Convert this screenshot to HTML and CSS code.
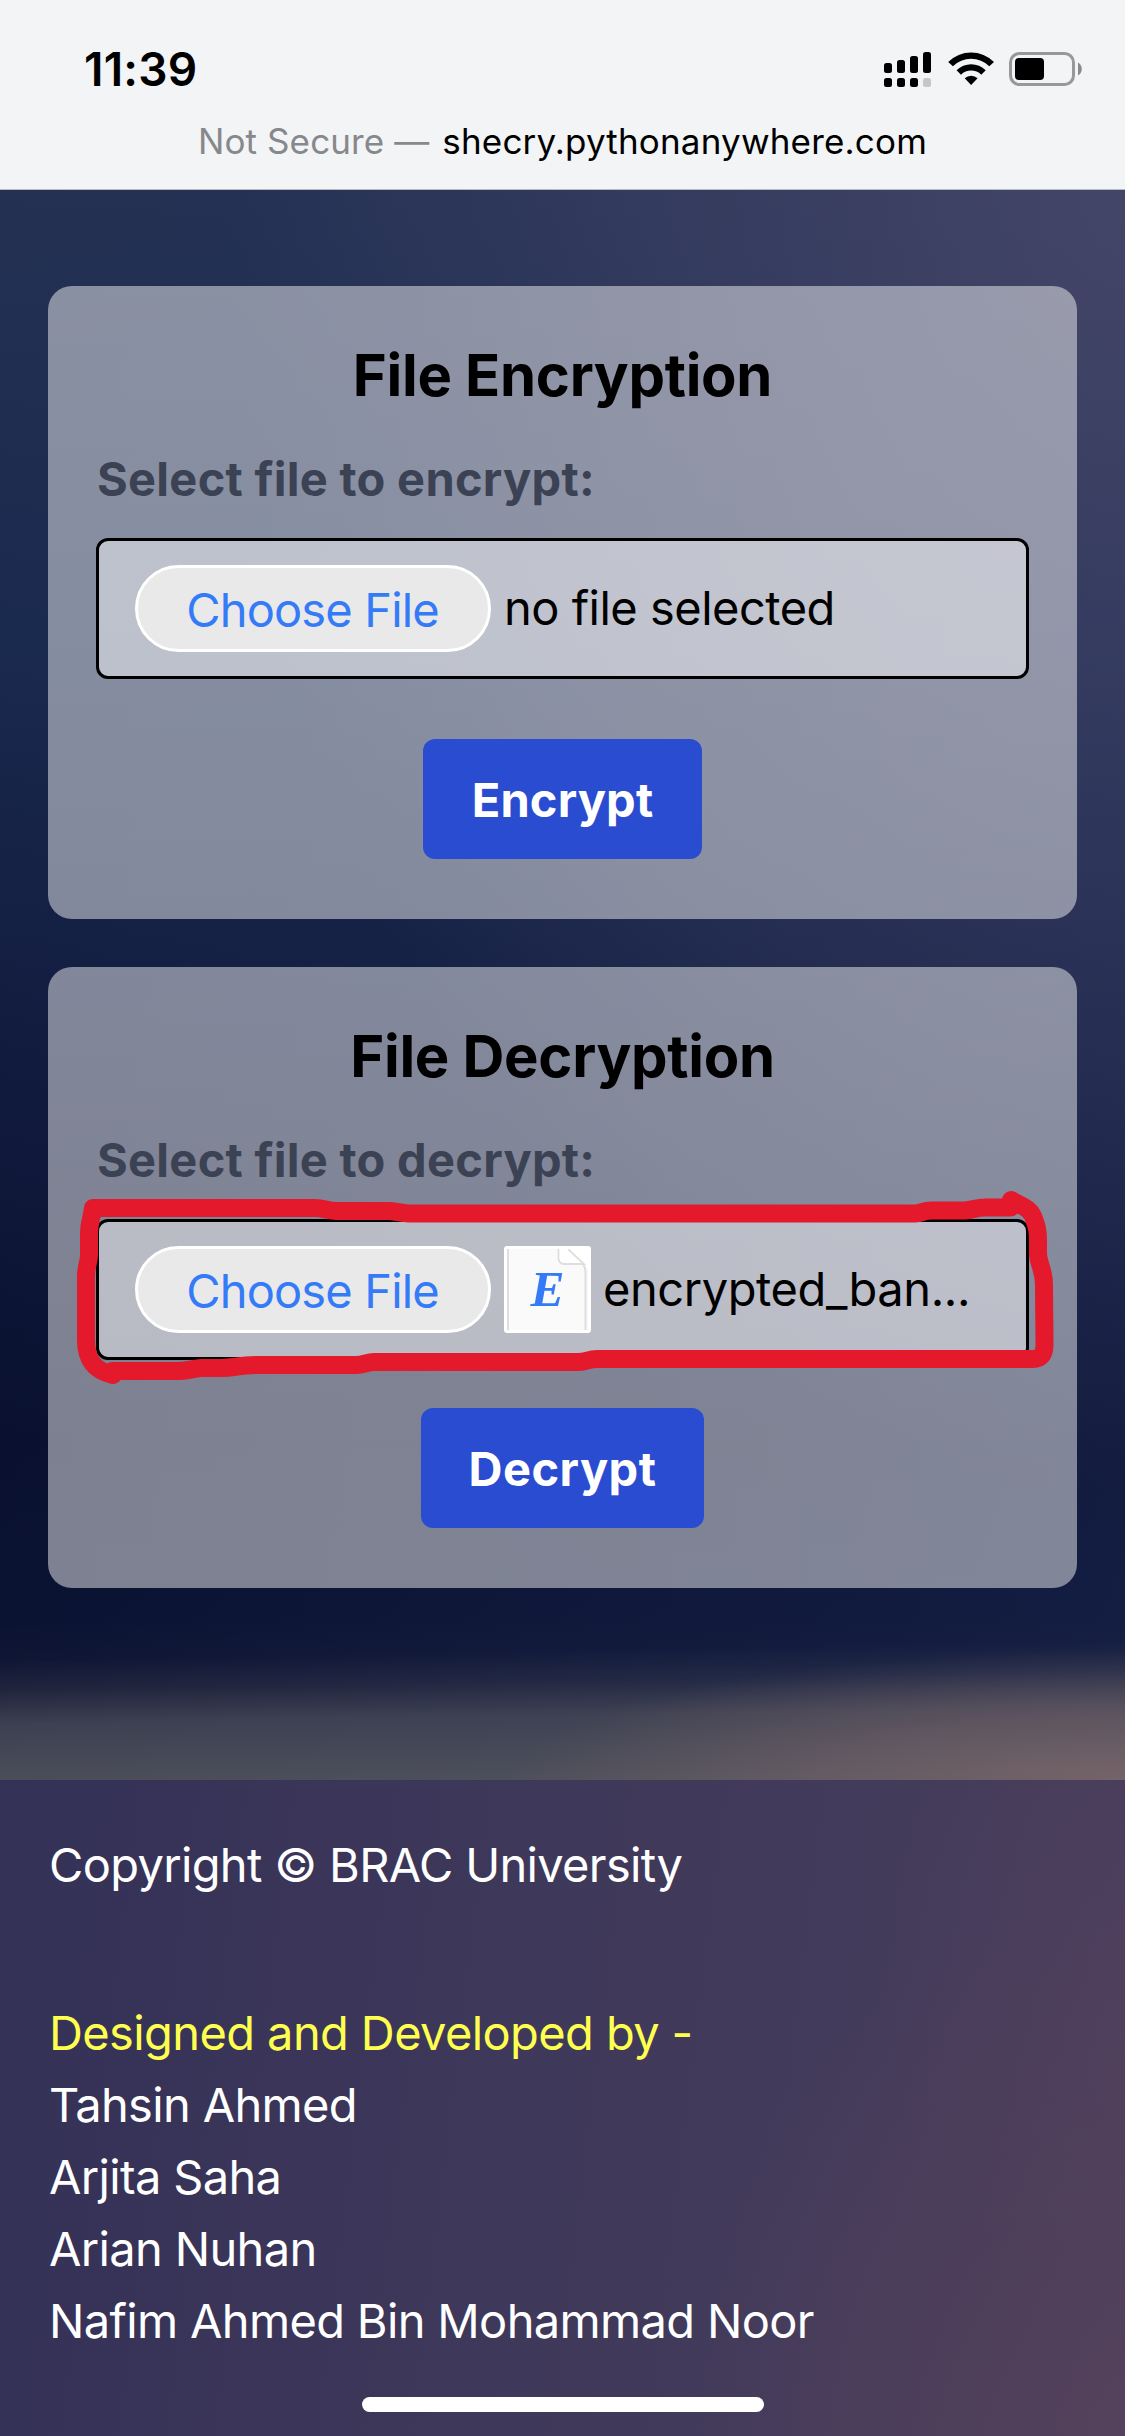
FILE: index.html
```
<!DOCTYPE html>
<html lang="en">
<head>
<meta charset="utf-8">
<title>File Encryption</title>
<link rel="stylesheet" href="styles.css">
</head>
<body>
<header class="browser-bar">
  <div class="status">
    <span class="time">11:39</span>
    <svg class="status-icons" width="200" height="36" viewBox="0 0 200 36">
      <rect x="0" y="11" width="8" height="10" rx="2.5"/>
      <rect x="13" y="8" width="8" height="13" rx="2.5"/>
      <rect x="26" y="4" width="8" height="17" rx="2.5"/>
      <rect x="39" y="0" width="8" height="21" rx="2.5"/>
      <rect x="0" y="26" width="8" height="9" rx="2.5"/>
      <rect x="13" y="26" width="8" height="9" rx="2.5"/>
      <rect x="26" y="26" width="8" height="9" rx="2.5"/>
      <rect x="39" y="26" width="8" height="9" rx="2.5" fill="#c5c6c8"/>
      <path d="M64.2 10 A32.5 32.5 0 0 1 110 10 L105.300 14.300 A26 26 0 0 0 68.900 14.300 Z"/>
      <path d="M72.600 18.300 A20.500 20.500 0 0 1 101.700 18.300 L97.300 22.700 A14.500 14.500 0 0 0 77 22.700 Z"/>
      <path d="M80.700 26.300 A9.500 9.500 0 0 1 93.600 26.300 L87.100 33 Z"/>
      <rect x="126.500" y="1.500" width="63" height="31" rx="9" fill="none" stroke="#97989a" stroke-width="3"/>
      <rect x="131" y="6" width="29" height="22" rx="4"/>
      <path d="M194 10.500 C199 13 199 21 194 23.500 Z" fill="#88898b"/>
    </svg>
  </div>
  <div class="address"><span class="insecure">Not Secure —</span><span class="host">shecry.pythonanywhere.com</span></div>
</header>

<main class="content">
  <section class="card">
    <h2 class="card-title">File Encryption</h2>
    <div class="label">Select file to encrypt:</div>
    <div class="field">
      <span class="choose">Choose File</span>
      <span class="file-name">no file selected</span>
    </div>
    <button class="submit encrypt">Encrypt</button>
  </section>

  <section class="card">
    <h2 class="card-title">File Decryption</h2>
    <div class="label">Select file to decrypt:</div>
    <div class="field">
      <span class="choose">Choose File</span>
      <span class="thumb">
        <svg class="sheet" width="81" height="81" viewBox="0 0 81 81">
          <rect width="81" height="81" fill="#fafafa"/>
          <path d="M1 0V81M78.500 81V24Q78.500 17 74 13L60 0" fill="none" stroke="#dedede" stroke-width="2"/>
          <path d="M61 0H81V20Q79 16 76 13Z" fill="#fff"/>
          <path d="M51.500 0V9Q51.500 15 57.500 15H77L61 0" fill="#fff" stroke="#dedede" stroke-width="1.800"/>
        </svg>
        <span class="letter">E</span>
      </span>
      <span class="file-name picked">encrypted_ban...</span>
      <svg class="marker" width="990" height="210" viewBox="76 1190 990 210">
        <path d="M93 1208 H315 C324 1208 328 1211 337 1211 H388 C396 1211 400 1213.500 409 1213.500 H915 C922 1213 923 1210.500 932 1210.500 H965 C973 1210 976 1207.500 985 1207.500 H1011 V1200 C1021 1206 1031 1208 1034 1219 Q1038 1228 1038 1240 V1255 C1039 1265 1044 1270 1044 1285 L1044.500 1345 Q1044.500 1359 1033 1359 H597 C588 1359 587 1362 578 1362 H374 C367 1362 364 1365 356 1365 H260 C240 1365 235 1367.500 222 1368 H201 C190 1369 188 1371 177 1371 H112 L113 1375 C96 1371 86 1362 86 1340 V1276 C86 1266 89 1262 89 1255 V1233 C89 1222 92 1218 93 1208 Z"/>
      </svg>
    </div>
    <button class="submit decrypt">Decrypt</button>
  </section>
</main>

<footer class="footer">
  <p class="line copyright">Copyright © BRAC University</p>
  <p class="line credit">Designed and Developed by -</p>
  <p class="line">Tahsin Ahmed</p>
  <p class="line">Arjita Saha</p>
  <p class="line">Arian Nuhan</p>
  <p class="line">Nafim Ahmed Bin Mohammad Noor</p>
  <div class="home-bar"></div>
</footer>
</body>
</html>
```
FILE: styles.css
```
* { box-sizing: border-box; margin: 0; padding: 0; }

body {
  width: 1125px;
  height: 2436px;
  display: flex;
  flex-direction: column;
  overflow: hidden;
  font-family: Inter, "Liberation Sans", sans-serif;
  font-size: 47px;
  line-height: 72px;
  color: #000;
}

/* Browser chrome */
.browser-bar {
  height: 190px;
  padding-top: 44px;
  background: #f3f4f6;
  border-bottom: 1px solid #b9bac0;
}
.status {
  height: 50px;
  padding: 0 41px 0 84px;
  display: flex;
  justify-content: space-between;
}
.time {
  font-size: 46px;
  font-weight: 600;
  line-height: 50px;
  letter-spacing: 0.2px;
}
.status-icons { margin-top: 8px; }
.address {
  padding-top: 24px;
  display: flex;
  justify-content: center;
  gap: 13px;
  font-size: 35px;
  line-height: 46px;
}
.insecure { color: #87888c; letter-spacing: 0.1px; }
.host { letter-spacing: 0.18px; }

/* Page */
.content {
  height: 1590px;
  padding: 96px 48px 0;
  display: flex;
  flex-direction: column;
  gap: 48px;
  background:
    radial-gradient(ellipse 620px 130px at 1125px 1590px, rgba(142, 112, 112, 0.6), rgba(142, 112, 112, 0.35) 50%, rgba(142, 112, 112, 0) 100%),
    linear-gradient(179deg, rgba(78, 80, 92, 0) 1470px, rgba(78, 80, 92, 0.22) 1500px, rgba(78, 80, 92, 0.7) 1535px, rgba(82, 84, 94, 0.92) 1600px),
    radial-gradient(ellipse 900px 1300px at 1125px 0, rgba(84, 80, 112, 0.65), rgba(84, 80, 112, 0) 100%),
    linear-gradient(97deg, rgba(40, 54, 100, 0), rgba(40, 54, 100, 0.35)),
    linear-gradient(180deg, #243153 0, #1a294e 450px, #111b3e 850px, #080f2d 1250px, #091130 1430px, #161a34 1530px);
}
.card {
  padding: 48px 48px 60px;
  display: flex;
  flex-direction: column;
  border-radius: 24px;
  background: rgba(246, 247, 246, 0.485);
}
.card-title {
  margin-bottom: 24px;
  font-size: 58px;
  font-weight: 700;
  line-height: 83px;
  padding-bottom: 1px;
  letter-spacing: -0.3px;
  text-align: center;
}
.label {
  margin-bottom: 23px;
  padding: 1px 0 0 1px;
  font-weight: 700;
  letter-spacing: 0.28px;
  color: #3b4254;
}
.field {
  position: relative;
  height: 141px;
  padding: 0 36px;
  display: flex;
  align-items: center;
  border: 3px solid #000;
  border-radius: 12px;
  background: rgba(255, 255, 255, 0.46);
}
.choose {
  width: 356px;
  height: 87px;
  padding: 6px 1px 0 0;
  border: 3px solid #fff;
  border-radius: 44px;
  background: #e9e9ea;
  color: #357bf7;
  letter-spacing: -0.84px;
  text-align: center;
}
.file-name { margin: -2px 0 0 13px; letter-spacing: -0.5px; }
.picked { margin-left: 12px; letter-spacing: -0.42px; }
.thumb {
  position: relative;
  width: 87px;
  height: 87px;
  margin-left: 13px;
  border: 3px solid #fff;
  border-radius: 3px;
  background: #fff;
}
.sheet { display: block; }
.letter {
  position: absolute;
  inset: 0;
  font: italic bold 51px/80px "Liberation Serif", serif;
  color: #357bf7;
  text-align: center;
}
.marker {
  position: absolute;
  left: -23px;
  top: -32px;
  fill: none;
  stroke: #e4192c;
  stroke-width: 18px;
  stroke-linejoin: round;
}
.submit {
  align-self: center;
  height: 120px;
  padding-top: 2px;
  border: 0;
  border-radius: 12px;
  background: #2a4cd0;
  color: #fff;
  font: 700 47px/72px Inter, "Liberation Sans", sans-serif;
}
.encrypt { width: 279px; margin-top: 60px; letter-spacing: 0.15px; }
.decrypt { width: 283px; margin-top: 48px; letter-spacing: 0.45px; }

/* Footer */
.footer {
  position: relative;
  flex: 1;
  padding: 49px 48px 0 49px;
  color: #fff;
  letter-spacing: -0.66px;
  background:
    radial-gradient(ellipse 520px 600px at 1180px 700px, rgba(96, 68, 92, 0.6), rgba(96, 68, 92, 0)),
    radial-gradient(ellipse 300px 350px at 1180px 200px, rgba(92, 68, 98, 0.35), rgba(92, 68, 98, 0)),
    linear-gradient(97deg, #343157, #3e385a 45%, #483e5b);
}
.copyright { margin-bottom: 96px; }
.credit { color: #ffff4f; letter-spacing: -0.6px; }
.home-bar {
  position: absolute;
  left: 362px;
  bottom: 24px;
  width: 402px;
  height: 15px;
  border-radius: 8px;
  background: #fff;
}
```
